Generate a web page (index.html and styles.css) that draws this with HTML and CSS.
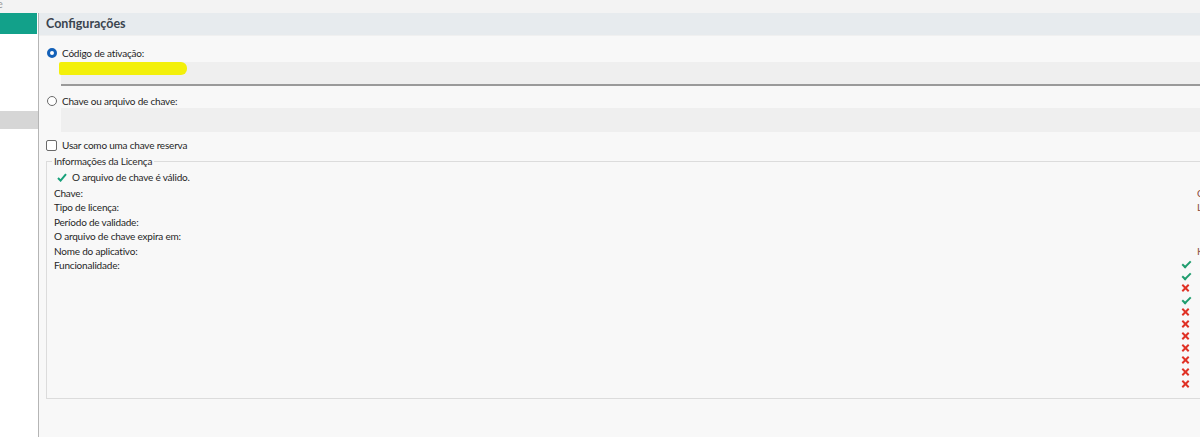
FILE: index.html
```html
<!DOCTYPE html>
<html lang="pt">
<head>
<meta charset="utf-8">
<link rel="stylesheet" href="styles.css">
</head>
<body>
<div class="topstrip"><span class="cut">e</span></div>
<div class="app">
  <aside class="sidebar">
    <div class="nav-active"></div>
    <div class="nav-gray"></div>
  </aside>
  <main class="main">
    <div class="header">Configurações</div>
    <div class="content">
      <label class="opt">
        <span class="radio checked"></span>
        <span>Código de ativação:</span>
      </label>
      <div class="input underline">
        <span class="scribble"></span>
      </div>
      <label class="opt opt2">
        <span class="radio"></span>
        <span>Chave ou arquivo de chave:</span>
      </label>
      <div class="input plain"></div>
      <label class="opt opt3">
        <span class="check"></span>
        <span>Usar como uma chave reserva</span>
      </label>
      <div class="fieldset">
        <div class="legend">Informações da Licença</div>
        <div class="valid">
          <svg class="ok" width="10" height="9" viewBox="0 0 10 9"><path d="M1 5 L3.6 7.6 L9 1.2" fill="none" stroke="#17a07a" stroke-width="2"/></svg>
          <span>O arquivo de chave é válido.</span>
        </div>
        <div class="rows">
          <div class="row"><span>Chave:</span><span class="val">C</span></div>
          <div class="row"><span>Tipo de licença:</span><span class="val">L</span></div>
          <div class="row"><span>Período de validade:</span><span class="val"></span></div>
          <div class="row"><span>O arquivo de chave expira em:</span><span class="val"></span></div>
          <div class="row"><span>Nome do aplicativo:</span><span class="val">K</span></div>
          <div class="row func">
            <span>Funcionalidade:</span>
            <div class="icons">
              <span class="i yes"></span>
              <span class="i yes"></span>
              <span class="i no"></span>
              <span class="i yes"></span>
              <span class="i no"></span>
              <span class="i no"></span>
              <span class="i no"></span>
              <span class="i no"></span>
              <span class="i no"></span>
              <span class="i no"></span>
              <span class="i no"></span>
            </div>
          </div>
        </div>
      </div>
    </div>
  </main>
</div>
</body>
</html>
```
FILE: styles.css
```css
html, body {
  margin: 0;
  padding: 0;
  width: 1200px;
  height: 437px;
  overflow: hidden;
  background: #f8f8f8;
  font-family: Lato, "Noto Sans", sans-serif;
  font-size: 10px;
  letter-spacing: -0.2px;
  line-height: 14px;
  color: #1f1f1f;
}
.topstrip {
  height: 13px;
  background: #f3f3f3;
  position: relative;
  overflow: hidden;
}
.cut {
  position: absolute;
  left: -3px;
  top: -3px;
  font-size: 11px;
  color: #9a9a9a;
}
.app {
  display: flex;
  height: 424px;
}
.sidebar {
  width: 38px;
  background: #ffffff;
  border-right: 1px solid #b5b5b5;
  flex: none;
}
.nav-active {
  height: 21px;
  background: #12a18a;
  margin-right: 1px;
}
.nav-gray {
  height: 18px;
  margin-top: 77px;
  background: #d6d6d6;
}
.main {
  flex: 1;
  background: #f8f8f8;
  overflow: hidden;
}
.header {
  height: 22px;
  background: #e7ebee;
  color: #3a444f;
  font-weight: bold;
  font-size: 12.5px;
  letter-spacing: 0;
  line-height: 22px;
  padding-left: 7px;
  border-bottom: 1px solid #f0f0f0;
}
.content {
  padding-left: 7px;
}
.opt {
  display: flex;
  align-items: center;
  gap: 5px;
  height: 14px;
  margin-top: 10px;
  margin-left: 1px;
}
.opt2 { margin-top: 8px; }
.opt3 { margin-top: 6px; margin-left: 0; }
.radio {
  width: 8px;
  height: 8px;
  border: 1px solid #6a6a6a;
  border-radius: 50%;
  background: #fff;
  flex: none;
}
.radio.checked {
  border: 3px solid #1461b8;
  width: 4px;
  height: 4px;
}
.check {
  width: 9px;
  height: 9px;
  border: 1px solid #6a6a6a;
  border-radius: 2px;
  background: #fff;
  flex: none;
}
.input {
  margin-left: 15px;
  height: 24px;
  background: #efefef;
  position: relative;
}
.input.underline {
  margin-top: 2px;
  border-bottom: 2px solid #9a9a9a;
  height: 22px;
}
.input.plain {
  margin-top: 0;
}
.scribble {
  position: absolute;
  left: -2px;
  top: 0;
  width: 128px;
  height: 13px;
  background: #f3f00a;
  border-radius: 2px 6px 6px 2px;
}
.fieldset {
  margin-top: 9px;
  border: 1px solid #dcdcdc;
  border-right: none;
  height: 236px;
  position: relative;
  padding-left: 7px;
}
.legend {
  position: absolute;
  top: -7px;
  left: 5px;
  padding: 0 2px;
  background: #f8f8f8;
  line-height: 13px;
  color: #2a2a2a;
}
.valid {
  display: flex;
  align-items: center;
  gap: 5px;
  margin-top: 8px;
  margin-left: 3px;
  height: 14px;
}
.rows {
  margin-top: 2px;
}
.row {
  display: flex;
  justify-content: space-between;
  height: 14.4px;
  line-height: 14px;
}
.val {
  width: 3px;
  overflow: hidden;
  color: #8a4a3a;
}
.func {
  align-items: flex-start;
}
.icons {
  display: flex;
  flex-direction: column;
  margin-right: 9px;
  margin-top: 1px;
}
.i {
  width: 10px;
  height: 12px;
  position: relative;
}
.i.yes::before {
  content: "";
  position: absolute;
  width: 3px;
  height: 7px;
  border-right: 2px solid #1f9d6e;
  border-bottom: 2px solid #1f9d6e;
  transform: rotate(45deg);
  transform-origin: center;
  left: 3px;
  top: 0px;
}
.i.no::before, .i.no::after {
  content: "";
  position: absolute;
  left: 0;
  top: 4px;
  width: 9px;
  height: 2px;
  background: #e03226;
  transform: rotate(45deg);
}
.i.no::after {
  transform: rotate(-45deg);
}
```
